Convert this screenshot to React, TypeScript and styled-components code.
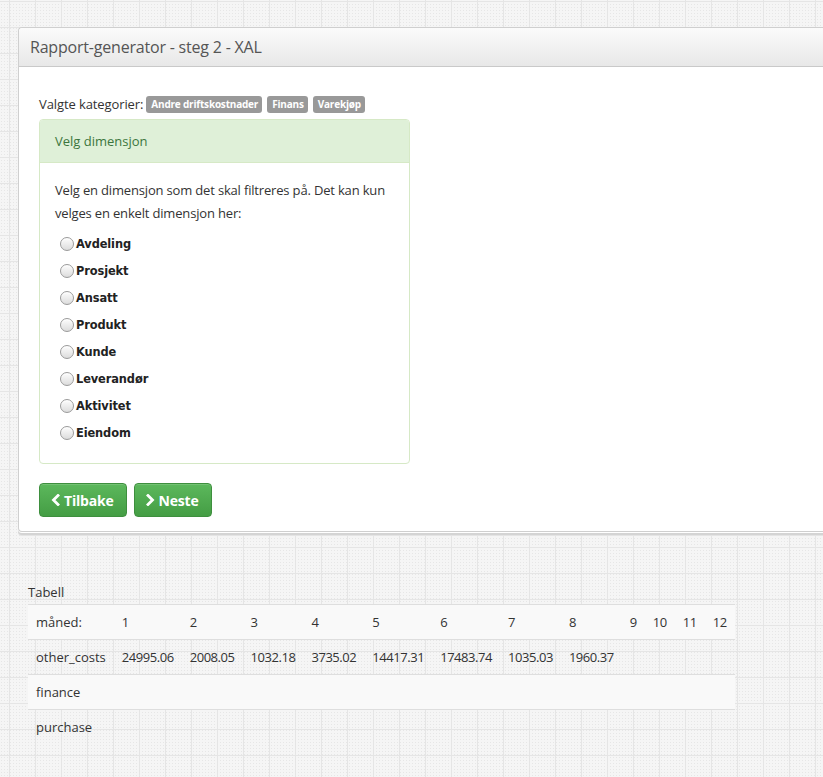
import React, { useState } from "react";
import styled, { createGlobalStyle } from "styled-components";

const GlobalStyle = createGlobalStyle`
  html, body {
    margin: 0;
    padding: 0;
  }
  body {
    overflow-x: hidden;
    min-height: 777px;
    font-family: "Open Sans", "Liberation Sans", sans-serif;
    font-size: 13px;
    color: #333;
    background-color: #f5f5f5;
    background-image:
      linear-gradient(to right, #e5e5e5 1px, transparent 1px),
      linear-gradient(to bottom, #e5e5e5 1px, transparent 1px),
      radial-gradient(circle, #e6e6e6 0.8px, transparent 0.9px);
    background-size: 26px 26px, 26px 26px, 3px 3px;
    background-position: 9px 1px, 9px 1px, 0 0;
  }
`;

const categories = ["Andre driftskostnader", "Finans", "Varekjøp"];
const dimensions = [
  "Avdeling",
  "Prosjekt",
  "Ansatt",
  "Produkt",
  "Kunde",
  "Leverandør",
  "Aktivitet",
  "Eiendom",
];
const months = [1, 2, 3, 4, 5, 6, 7, 8, 9, 10, 11, 12];
const rows: { name: string; values: string[] }[] = [
  {
    name: "other_costs",
    values: ["24995.06", "2008.05", "1032.18", "3735.02", "14417.31", "17483.74", "1035.03", "1960.37"],
  },
  { name: "finance", values: [] },
  { name: "purchase", values: [] },
];

const Chevron = ({ dir }: { dir: "left" | "right" }) => (
  <svg width="9" height="12" viewBox="0 0 9 12">
    <path
      d={dir === "left" ? "M7 1.5 L2.5 6 L7 10.5" : "M2 1.5 L6.5 6 L2 10.5"}
      fill="none"
      stroke="#fff"
      strokeWidth="2.8"
      strokeLinecap="square"
    />
  </svg>
);

const App = () => {
  const [selected, setSelected] = useState<string | null>(null);
  return (
    <>
      <GlobalStyle />
      <Page>
        <Box>
          <BoxHeader>
            <BoxTitle>Rapport-generator - steg 2 - XAL</BoxTitle>
          </BoxHeader>
          <BoxBody>
            <Chosen>
              Valgte kategorier:
              {categories.map((c) => (
                <Tag key={c}>{c}</Tag>
              ))}
            </Chosen>
            <GreenPanel>
              <PanelHeading>Velg dimensjon</PanelHeading>
              <PanelBody>
                <Intro>
                  Velg en dimensjon som det skal filtreres på. Det kan kun velges en enkelt dimensjon her:
                </Intro>
                <RadioList>
                  {dimensions.map((d) => (
                    <RadioRow key={d} onClick={() => setSelected(d)}>
                      <RadioDot $checked={selected === d} />
                      {d}
                    </RadioRow>
                  ))}
                </RadioList>
              </PanelBody>
            </GreenPanel>
            <ButtonRow>
              <GreenButton>
                <Chevron dir="left" />
                Tilbake
              </GreenButton>
              <GreenButton>
                <Chevron dir="right" />
                Neste
              </GreenButton>
            </ButtonRow>
          </BoxBody>
        </Box>

        <TableSection>
          <Caption>Tabell</Caption>
          <DataTable>
            <tbody>
              <tr>
                <Cell>måned:</Cell>
                {months.map((m) => (
                  <Cell key={m} $num>
                    {m}
                  </Cell>
                ))}
              </tr>
              {rows.map((r) => (
                <tr key={r.name}>
                  <Cell>{r.name}</Cell>
                  {months.map((m, i) => (
                    <Cell key={m} $num>
                      {r.values[i] ?? ""}
                    </Cell>
                  ))}
                </tr>
              ))}
            </tbody>
          </DataTable>
        </TableSection>
      </Page>
    </>
  );
};

const Page = styled.div`
  padding-top: 27px;
  padding-left: 18px;
`;

const Box = styled.div`
  width: 830px;
  background: #fff;
  border: 1px solid #cfcfcf;
  border-right: none;
  border-radius: 4px 0 0 4px;
  box-shadow: 0 1px 0 #fff, 0 3px 0 #d4d4d4, 0 4px 0 #e4e4e4;
`;

const BoxHeader = styled.div`
  height: 38px;
  display: flex;
  align-items: center;
  padding: 0 11px;
  background: linear-gradient(to bottom, #fbfbfb, #e8e8e8);
  border-bottom: 1px solid #c9c9c9;
  border-radius: 4px 0 0 0;
`;

const BoxTitle = styled.h3`
  margin: 0;
  font-size: 16px;
  letter-spacing: -0.2px;
  font-weight: 400;
  color: #555;
`;

const BoxBody = styled.div`
  padding: 27px 20px 14px 20px;
`;

const Chosen = styled.div`
  display: flex;
  align-items: center;
  height: 20px;
  font-size: 13px;
  letter-spacing: -0.1px;
  color: #333;
  margin-bottom: 5px;
`;

const Tag = styled.span`
  display: inline-block;
  margin-left: 5px;
  padding: 0 4px 0 5px;
  height: 17px;
  line-height: 17px;
  font-size: 10px;
  letter-spacing: -0.2px;
  font-weight: 700;
  color: #fff;
  background: #999;
  border-radius: 3px;
  &:first-of-type {
    margin-left: 3px;
  }
`;

const GreenPanel = styled.div`
  width: 369px;
  border: 1px solid #d6e9c6;
  border-radius: 4px;
  background: #fff;
`;

const PanelHeading = styled.div`
  height: 42px;
  display: flex;
  align-items: center;
  padding: 0 15px;
  background: #dff0d8;
  color: #3c763d;
  font-size: 13px;
  border-bottom: 1px solid #d6e9c6;
  border-radius: 3px 3px 0 0;
`;

const PanelBody = styled.div`
  padding: 16px 15px 17px 15px;
`;

const Intro = styled.p`
  margin: 0 0 5px 0;
  line-height: 23px;
  font-size: 13px;
  letter-spacing: -0.17px;
  color: #333;
`;

const RadioList = styled.div`
  display: flex;
  flex-direction: column;
`;

const RadioRow = styled.label`
  display: flex;
  align-items: center;
  height: 27px;
  padding-left: 5px;
  font-family: "DejaVu Sans", "Open Sans", sans-serif;
  font-weight: 700;
  font-size: 11.4px;
  letter-spacing: -0.1px;
  color: #222;
  cursor: pointer;
`;

const RadioDot = styled.span<{ $checked: boolean }>`
  box-sizing: border-box;
  width: 14px;
  height: 14px;
  margin-right: 2px;
  border-radius: 50%;
  border: 1px solid #9a9a9a;
  background: ${(p) =>
    p.$checked
      ? "radial-gradient(circle, #333 0 3px, #e8e8e8 3.5px)"
      : "linear-gradient(to bottom, #fdfdfd, #dcdcdc)"};
  box-shadow: inset 0 1px 1px rgba(255, 255, 255, 0.8);
`;

const ButtonRow = styled.div`
  display: flex;
  gap: 7px;
  margin-top: 19px;
`;

const GreenButton = styled.button`
  display: inline-flex;
  align-items: center;
  gap: 4px;
  height: 34px;
  padding: 0 12px 0 11px;
  font-family: "Open Sans", "Liberation Sans", sans-serif;
  font-size: 14px;
  letter-spacing: -0.2px;
  font-weight: 700;
  color: #fff;
  background: linear-gradient(to bottom, #5cb85c, #449d44);
  border: 1px solid #3e8f3e;
  border-radius: 4px;
  box-shadow: inset 0 1px 0 rgba(255, 255, 255, 0.15);
  cursor: pointer;
`;

const TableSection = styled.div`
  margin-top: 51px;
  margin-left: 10px;
`;

const Caption = styled.div`
  font-size: 13px;
  line-height: 18px;
  color: #333;
  margin-bottom: 3px;
`;

const DataTable = styled.table`
  border-collapse: collapse;
  border-spacing: 0;
  tr:nth-child(odd) td {
    background: #f9f9f9;
  }
`;

const Cell = styled.td<{ $num?: boolean }>`
  padding: 8px;
  line-height: 18px;
  font-size: 13px;
  letter-spacing: ${(p) => (p.$num ? "-0.45px" : "0")};
  color: #333;
  white-space: nowrap;
  border-top: 1px solid #dedede;
`;

export default App;
